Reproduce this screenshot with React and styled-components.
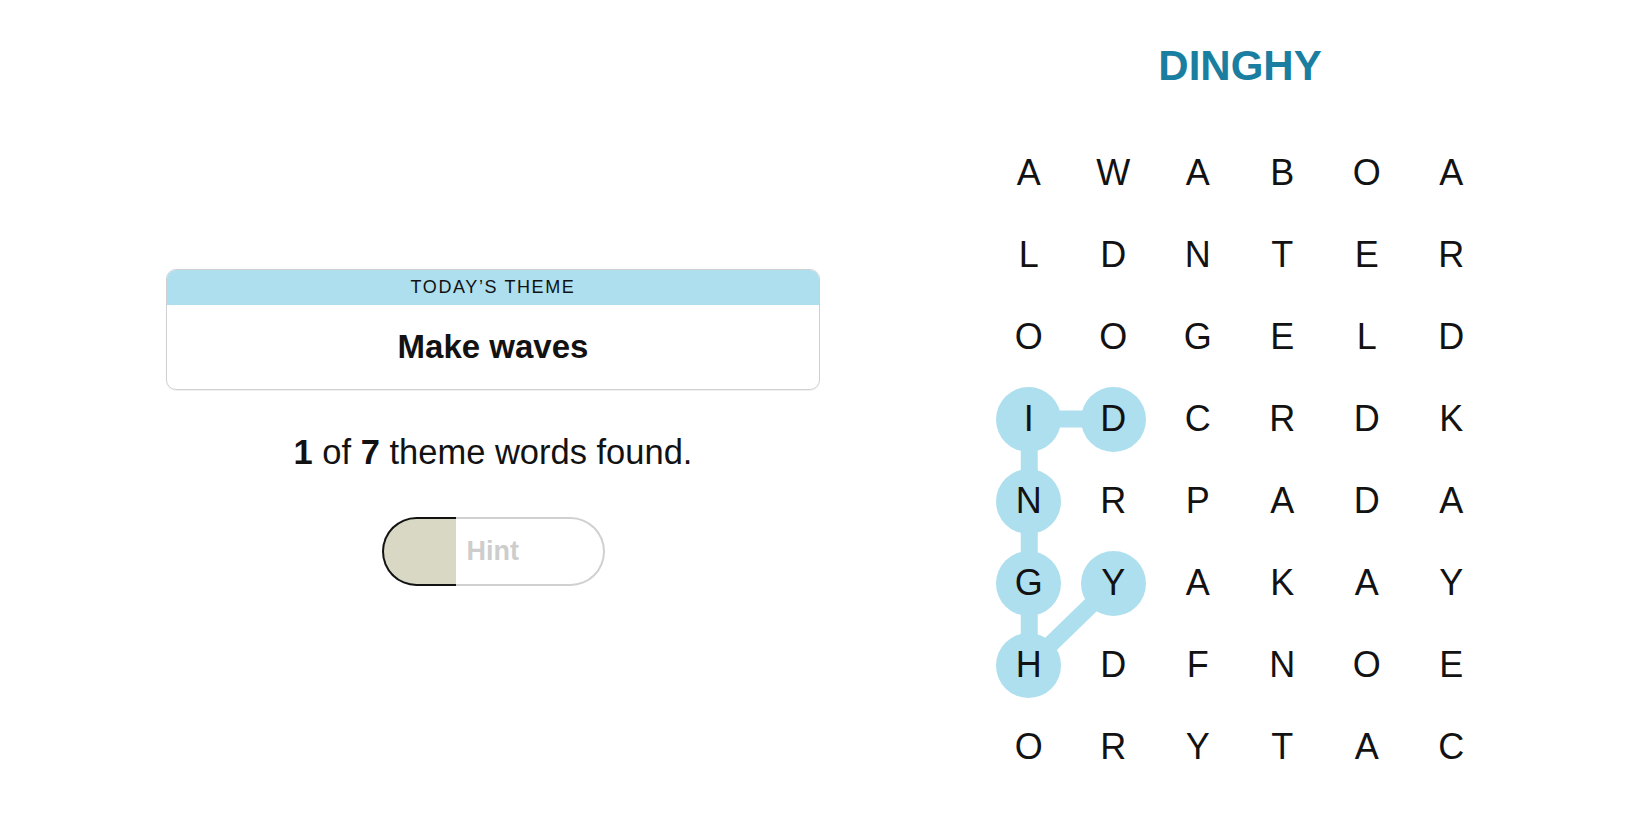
import React from "react";
import styled, { createGlobalStyle } from "styled-components";

const colors = {
  ink: "#121212",
  theme: "#aedfee",
  title: "#1a7ea1",
  hint: "#d8d8c4",
  line: "#d0d0d0",
  muted: "#cdcdcd",
};

const GlobalStyle = createGlobalStyle`
  html, body {
    margin: 0;
    padding: 0;
    background: #ffffff;
    font-family: "Liberation Sans", Arial, sans-serif;
    color: ${colors.ink};
  }
`;

const Page = styled.div`
  display: flex;
  align-items: flex-start;
  height: 825px;
  padding-left: 166px;
  gap: 160px;
  box-sizing: border-box;
  overflow: hidden;
`;

const Sidebar = styled.section`
  width: 654px;
  padding-top: 269px;
  display: flex;
  flex-direction: column;
  align-items: center;
`;

const ThemeCard = styled.div`
  width: 100%;
  height: 121px;
  box-sizing: border-box;
  border: 1px solid ${colors.line};
  border-radius: 10px;
  overflow: hidden;
  display: flex;
  flex-direction: column;
  box-shadow: 0 1px 1px rgba(0, 0, 0, 0.06);
`;

const ThemeLabel = styled.div`
  height: 35px;
  background: ${colors.theme};
  display: flex;
  align-items: center;
  justify-content: center;
  font-size: 18px;
  letter-spacing: 1.6px;
  text-transform: uppercase;
`;

const ThemeName = styled.div`
  flex: 1;
  display: flex;
  align-items: center;
  justify-content: center;
  font-size: 33px;
  font-weight: 700;
`;

const Status = styled.p`
  margin: 42px 0 0;
  font-size: 34.5px;
  line-height: 40px;
  b {
    font-weight: 700;
  }
`;

const HintButton = styled.button`
  margin-top: 45px;
  display: flex;
  width: 223px;
  height: 69px;
  padding: 0;
  border: none;
  background: #fff;
  font-family: inherit;
  cursor: pointer;
`;

const HintFill = styled.span`
  width: 74px;
  box-sizing: border-box;
  background: ${colors.hint};
  border: 2px solid ${colors.ink};
  border-right: none;
  border-radius: 35px 0 0 35px;
`;

const HintRest = styled.span`
  flex: 1;
  box-sizing: border-box;
  display: flex;
  align-items: center;
  padding-left: 11px;
  border: 2px solid ${colors.line};
  border-left: none;
  border-radius: 0 35px 35px 0;
  color: ${colors.muted};
  font-size: 27px;
  font-weight: 700;
`;

const Board = styled.section`
  width: 520px;
  display: flex;
  flex-direction: column;
  align-items: center;
`;

const Spangram = styled.h1`
  margin: 41px 0 0;
  font-size: 42px;
  line-height: 50px;
  font-weight: 700;
  color: ${colors.title};
`;

const Grid = styled.div`
  position: relative;
  margin-top: 41px;
  display: grid;
  grid-template-columns: repeat(6, 84.5px);
  grid-auto-rows: 82px;
`;

const PathLayer = styled.svg`
  position: absolute;
  inset: 0;
  pointer-events: none;
`;

const Cell = styled.div`
  position: relative;
  z-index: 1;
  display: flex;
  align-items: center;
  justify-content: center;
`;

const Letter = styled.span`
  width: 65px;
  height: 65px;
  border-radius: 50%;
  display: flex;
  align-items: center;
  justify-content: center;
  font-size: 36px;
  background: ${(p) => (p.$selected ? colors.theme : "transparent")};
`;

const rows = [
  "AWABOA",
  "LDNTER",
  "OOGELD",
  "IDCRDK",
  "NRPADA",
  "GYAKAY",
  "HDFNOE",
  "ORYTAC",
];

// spangram path, in order: D I N G H Y
const path = [
  [3, 1],
  [3, 0],
  [4, 0],
  [5, 0],
  [6, 0],
  [5, 1],
];

const cx = (c) => c * 84.5 + 42.25;
const cy = (r) => r * 82 + 41;

const isSelected = (r, c) => path.some(([pr, pc]) => pr === r && pc === c);

export default function App() {
  const points = path.map(([r, c]) => `${cx(c)},${cy(r)}`).join(" ");

  return (
    <>
      <GlobalStyle />
      <Page>
        <Sidebar>
          <ThemeCard>
            <ThemeLabel>Today’s theme</ThemeLabel>
            <ThemeName>Make waves</ThemeName>
          </ThemeCard>
          <Status>
            <b>1</b> of <b>7</b> theme words found.
          </Status>
          <HintButton>
            <HintFill />
            <HintRest>Hint</HintRest>
          </HintButton>
        </Sidebar>
        <Board>
          <Spangram>DINGHY</Spangram>
          <Grid>
            <PathLayer width="507" height="656">
              <polyline
                points={points}
                fill="none"
                stroke={colors.theme}
                strokeWidth="17"
                strokeLinejoin="round"
              />
            </PathLayer>
            {rows.map((row, r) =>
              row.split("").map((ch, c) => (
                <Cell key={`${r}-${c}`}>
                  <Letter $selected={isSelected(r, c)}>{ch}</Letter>
                </Cell>
              ))
            )}
          </Grid>
        </Board>
      </Page>
    </>
  );
}
